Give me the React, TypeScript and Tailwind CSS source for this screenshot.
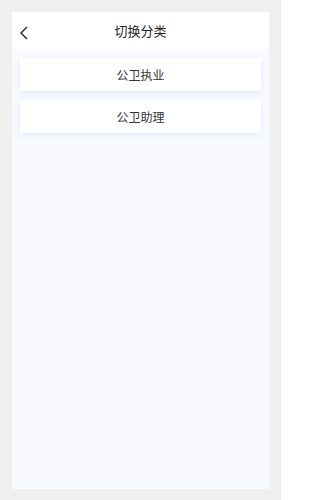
const items = ["公卫执业", "公卫助理"];

export default function App() {
  return (
    <div
      className="flex h-[500px] w-[281px] bg-[#f0f0f0] px-3 pt-3 pb-[11px]"
      style={{ fontFamily: '"Noto Sans CJK SC", "Noto Sans", sans-serif' }}
    >
      <div className="flex flex-1 flex-col bg-[#f8faff]">
        <div className="relative flex h-[37px] items-center justify-center bg-white">
          <button className="absolute left-[6px] top-[14px] flex h-[14px] w-[10px] items-center justify-center">
            <svg width="9" height="14" viewBox="0 0 9 14" fill="none">
              <path d="M8 1L2 7l6 6" stroke="#222" strokeWidth="1.4" />
            </svg>
          </button>
          <span className="text-[13px] leading-none text-[#222]">切换分类</span>
        </div>
        <div className="flex flex-col gap-[9px] px-2 pt-[9px]">
          {items.map((item) => (
            <div
              key={item}
              className="flex h-[33px] items-center justify-center bg-white text-[12px] text-[#333] shadow-[0_2px_6px_rgba(200,215,240,0.45)]"
            >
              {item}
            </div>
          ))}
        </div>
      </div>
    </div>
  );
}
